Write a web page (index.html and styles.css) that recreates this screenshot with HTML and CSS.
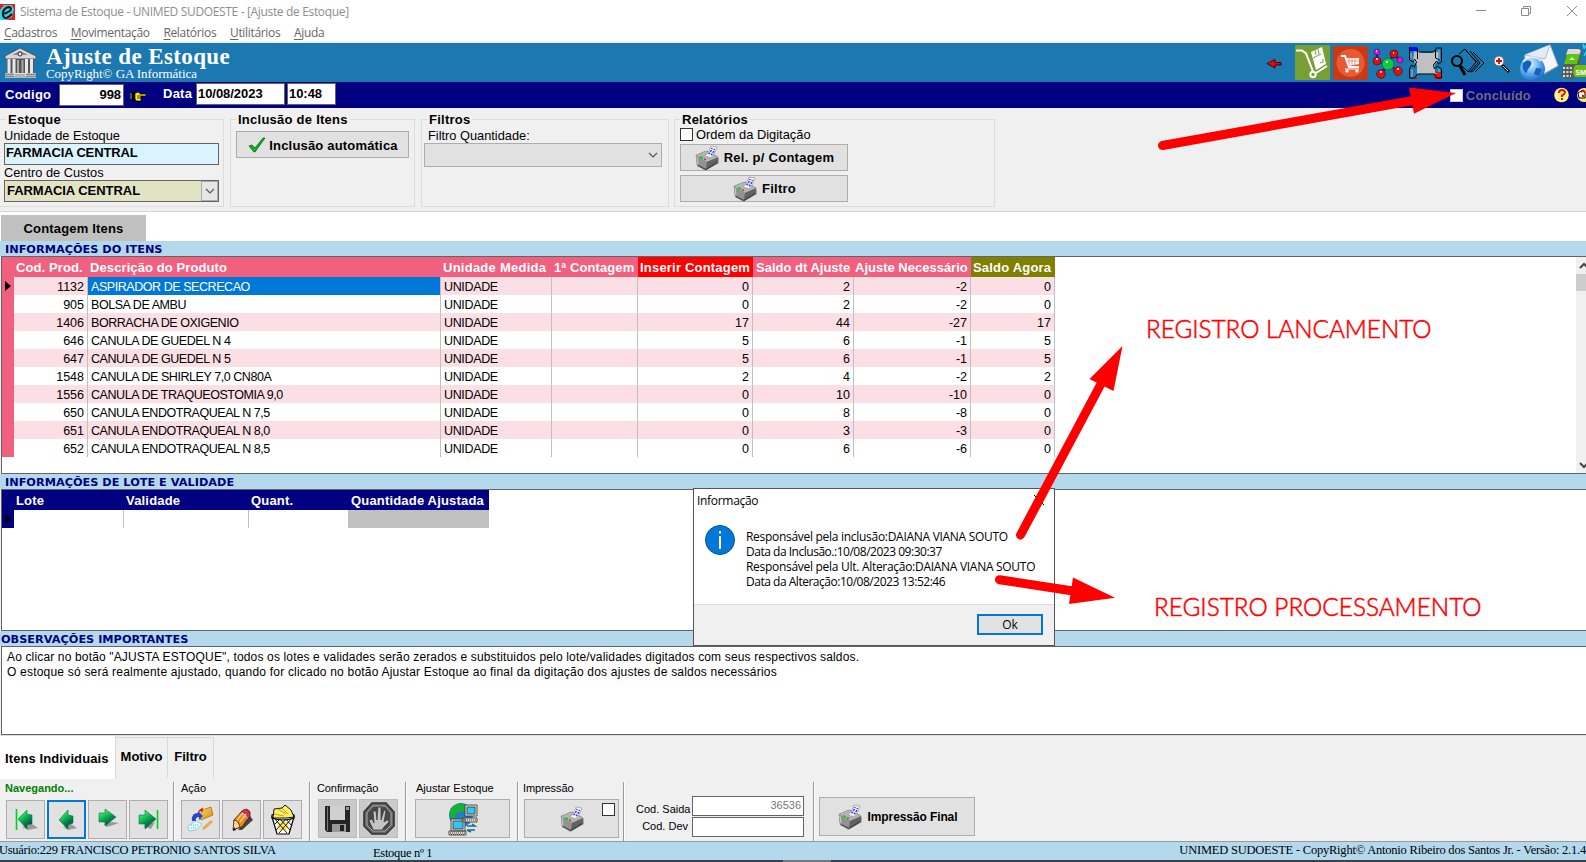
FILE: index.html
```html
<!DOCTYPE html>
<html lang="pt-BR">
<head>
<meta charset="utf-8">
<title>Sistema de Estoque</title>
<link rel="stylesheet" href="styles.css">
</head>
<body>
<svg class="defs" width="0" height="0">
  <defs>
    <linearGradient id="gold" x1="0" y1="0" x2="1" y2="1"><stop offset="0" stop-color="#ffe07a"/><stop offset="1" stop-color="#d28a08"/></linearGradient>
    <linearGradient id="leaf" x1="0" y1="0" x2=".6" y2="1"><stop offset="0" stop-color="#7dffa0"/><stop offset=".4" stop-color="#18d050"/><stop offset=".65" stop-color="#089050"/><stop offset="1" stop-color="#004a40"/></linearGradient>
    <radialGradient id="globe" cx=".4" cy=".3" r=".8"><stop offset="0" stop-color="#e8f6ff"/><stop offset=".5" stop-color="#5aa8ec"/><stop offset="1" stop-color="#0a55b8"/></radialGradient>
    <symbol id="printer" viewBox="0 0 26 26">
      <path d="M3 20 11 26 25 18 24 14z" fill="#9a9a9a"/>
      <path d="M2 12Q1 10 3 9.500L11 6q2-.5 4 .5l8 4.500q2 1 1.500 3L24 18 12 25 3 21z" fill="#777"/>
      <path d="M2 10.500 12 6 24 12 13 17z" fill="#b4b4b4"/>
      <path d="M2 10.500 13 17 12 25 3 21z" fill="#929292"/>
      <path d="M13 17 24 12.500 24 18 12 25z" fill="#626262"/>
      <path d="M4 20.500 12 24.500 23 17.500" stroke="#3a3a3a" fill="none"/>
      <path d="M3 12l1 7" stroke="#d0d0d0"/>
      <path d="M11 11q4-3 6-10l6 1q-2 7-6 11z" fill="#eef0ff" stroke="#999" stroke-width=".7"/>
      <path d="M14.500 9q2.500-2 3.500-6M17 10q2.500-2 3.500-6" fill="none" stroke="#2f35e0" stroke-width="1.500" stroke-dasharray="2 1"/>
      <path d="M6 12l3 1" stroke="#10d020" stroke-width="2"/><path d="M10 14l2 .5" stroke="#e03030" stroke-width="1.500"/>
    </symbol>
    <symbol id="chev" viewBox="0 0 10 6"><path d="M1 1l4 4 4-4" fill="none" stroke="#555" stroke-width="1.200"/></symbol>
  </defs>
</svg>

<div class="app">
  <header class="titlebar">
    <svg width="15" height="16" viewBox="0 0 15 16"><path fill="#f01818" d="M0 0h15v16H0z"/><path fill="#28d8e8" d="M4 1h8l2 4-2 8-6 3H0V6z"/><path d="M2 10C9 9 13 5 10 3.500S2 6 3 11s5 3 9-1" fill="none" stroke="#111" stroke-width="2"/></svg>
    <span class="title-text">Sistema de Estoque - UNIMED SUDOESTE - [Ajuste de Estoque]</span>
    <svg class="winbtns" width="110" height="20" viewBox="0 0 110 20" fill="none" stroke="#8b8b8b"><path d="M0 8.500h10M45.500 6.500h7v7h-7zM47.500 6V4.500h7v7H53M91 4l10 10M101 4 91 14"/></svg>
  </header>
  <nav class="menubar"><span><u>C</u>adastros</span><span><u>M</u>ovimentação</span><span><u>R</u>elatórios</span><span><u>U</u>tilitários</span><span><u>A</u>juda</span></nav>

  <div class="banner">
    <svg class="bank" width="33" height="33" viewBox="0 0 33 33">
      <path d="M1 9 16 1l16 8v3H1z" fill="#d8d8d8" stroke="#555"/><path d="M8 8l8-4 8 4z" fill="#888"/><circle cx="16" cy="7" r="2" fill="#eee" stroke="#333"/>
      <path d="M3 12h27v14H3z" fill="#555"/><path d="M5 12v14M10 12v14M22.500 12v14M27.500 12v14" stroke="#e8e8e8" stroke-width="3"/><path d="M14 13v13M18.500 13v13" stroke="#a8a8a8" stroke-width="2"/>
      <path d="M1 26h31v5H1z" fill="#bbb"/><path d="M1 27.500h31M1 29.500h31" stroke="#888"/><path d="M10 26h12v5H10z" fill="#e0e0e0"/><path d="M11 28h10M10 30h12" stroke="#888"/>
    </svg>
    <div class="banner-titles"><h1>Ajuste de Estoque</h1><p>CopyRight© GA Informática</p></div>
    <div class="banner-icons">
      <svg width="33" height="39" viewBox="0 0 33 39"><path d="M5 20.500 13 16.500v3h6v2.500h-6v3z" fill="#f00" stroke="#300" stroke-width=".9"/></svg>
      <svg width="35" height="39" viewBox="0 0 35 39"><rect y="2" width="35" height="35" rx="1" fill="#789f34"/><path d="M1 7.500h6l4 3 7 18" fill="none" stroke="#fff" stroke-width="2"/><circle cx="18" cy="31.500" r="2.700" fill="none" stroke="#fff" stroke-width="2"/><path d="M21 30l11-7" stroke="#fff" stroke-width="2"/><path d="M16 9l11-5 4 17-10 6z" fill="#fff"/><path d="M20 7l1 5M23 6l1 5M18 15l8-4M25 20l3-1v-3" stroke="#789f34" fill="none"/></svg>
      <svg width="41" height="39" viewBox="0 0 41 39"><rect x="3" y="3" width="35" height="34" rx="2" fill="#c93a14"/><circle cx="20.500" cy="20" r="14" fill="#e85a34"/><path d="M11 13h4l4 11h10" fill="none" stroke="#fff" stroke-width="2"/><path d="M16 15h13v6l-11 2z" fill="#fff"/><path d="M17 18h12M19 15v7M22 15v7M25 15v7" stroke="#e85a34" stroke-width=".6"/><circle cx="17" cy="28" r="1.600" fill="#fff"/><circle cx="27" cy="28" r="1.600" fill="#fff"/><path d="M15 26h14" stroke="#fff"/></svg>
      <svg width="34" height="39" viewBox="0 0 34 39"><path d="M16 22 7 18M16 22l8-12M16 22 10 31M16 22l12 6M24 11l4 6M6 10v8" stroke="#0018c8" stroke-width="2.400"/><path d="M16 22 7 18M16 22l8-12M16 22 10 31M16 22l12 6" stroke="#aaf" stroke-dasharray="1 2"/><circle cx="17" cy="21" r="6" fill="#10c83a" stroke="#063" stroke-width=".7"/><g fill="#e01010" stroke="#600" stroke-width=".7"><circle cx="6" cy="18" r="3.900"/><circle cx="23" cy="11" r="4"/><circle cx="10" cy="31" r="4.300"/><circle cx="27" cy="28" r="4.300"/></g><g fill="#d020d0" stroke="#606" stroke-width=".7"><circle cx="6" cy="9" r="2.900"/><circle cx="29" cy="17" r="2.900"/></g><path d="M15 19h2M22 10h1M9 29h2M26 26h2M5 16h2M5 8h1" stroke="#fff" stroke-width="1.400"/></svg>
      <svg width="41" height="39" viewBox="0 0 41 39"><path d="M30 29h6v7h-7zM6 36l6-3v3z" fill="#f01010"/><path d="M5 4h7v4H5z" fill="#0010f0"/><path d="M9 9h5l4 1h8l4-1h3v9l-3 3v9l3 1H12V22l-4-4z" fill="#c0c0c0"/><path d="M4.500 4v13l4 2 1-3 2 3-2 5-3-2-2 4v9h5l3-4h17l2 4h5V26l-4-3-3 3-1-4 3-4 2 3 3-2V5h-5l-3 4H14M12.500 5v11M30.500 6v9l4 2" fill="none" stroke="#000"/><path d="M6 10v6M10 8v8M7 26v8M34 7v9M34 26v3" stroke="#9cc5dc"/></svg>
      <svg width="43" height="39" viewBox="0 0 43 39" fill="none" stroke="#000"><path d="M13 11 19 6l11 13-8 10-6-6M20 8l12 12-8 9-3-1M24 8l10 12-8 9-3-1M27 9l11 11-9 9"/><circle cx="11" cy="18" r="5" stroke-width="2.200"/><path d="M14 23l5 9" stroke-width="3"/></svg>
      <svg width="27" height="39" viewBox="0 0 27 39"><path d="M13 22l7 7" stroke="#000" stroke-width="2.600"/><path d="M14 23l5 5" stroke="#ddd"/><circle cx="10" cy="18" r="5" fill="#f7f7f7" stroke="#666"/><path d="M10 15v6M7 18h6" stroke="#e00010" stroke-width="1.800"/></svg>
      <svg width="45" height="39" viewBox="0 0 45 39"><path d="M9 12 34 2l8 21-14 8-19-9z" fill="#f5f7fc" stroke="#c0c6d8"/><path d="M9 12l20 4 5-14" fill="#e6eaf5" stroke="#b4bace"/><path d="M28 31 42 23" stroke="#889"/><circle cx="16.500" cy="26" r="12.500" fill="url(#globe)"/><path d="M7 20c5-5 10-2 8 2s-4 4-4 8c-4-1-5-6-4-10zM20 25l6 1-3 7-5-2z" fill="#1460bc"/><path d="M7 19c4-6 13-6 18-1" fill="none" stroke="#fff" opacity=".7" stroke-width="2"/></svg>
      <svg width="25" height="39" viewBox="0 0 25 39"><path d="M6 6 17 5l4 3-5 27-10 1-6-3z" fill="#565e5c"/><path d="M7 6h11l2 2-2 4H5z" fill="#d8dcdc"/><path d="M6 11h13l-3 10H3z" fill="#5fc214"/><path d="M8 17l3-3 3 3z" fill="#d8ffc0"/><path d="M2 25h9M2 29h9M2 33h8" stroke="#ddd" stroke-width="2" stroke-dasharray="2 1.500"/><path d="M15 22h12v12H14l-2-4 1-6z" fill="#70bd18"/><text x="14.500" y="31.500" class="sms">SM</text><path d="M22 1l1 4m2-3-2 4m2 3-2 4" stroke="#30d8f0" stroke-width="1.400"/></svg>
    </div>
  </div>

  <div class="codebar">
    <label class="cb-label c1">Codigo</label><div class="cb-input i1">998</div>
    <svg width="16" height="12" viewBox="0 0 16 12"><path d="M0 2h5v9H0z" fill="#000"/><path d="M1 3v6" stroke="#30d8d8"/><path d="M5 3l4-1 1 2h6v2h-5v5H6L5 9z" fill="#ffe818" stroke="#000" stroke-width=".7"/><path d="M7 6h4M7 8h4" stroke="#000" stroke-width=".7"/></svg>
    <label class="cb-label c2">Data</label><div class="cb-input i2">10/08/2023</div><div class="cb-input i3">10:48</div>
    <div class="done"><i></i><span>Concluído</span></div>
    <svg width="32" height="16" viewBox="0 0 32 16"><circle cx="7.500" cy="8" r="7.300" fill="#fff27a"/><path d="M5 6q0-3 3-3t3 2.500Q10 8 8 8.500V10" fill="none" stroke="#e01010" stroke-width="2"/><path d="M7 12h2" stroke="#e01010" stroke-width="2"/><circle cx="30" cy="8" r="7" fill="#ffef70"/><path d="M24 6l5-3 2 3v5h-6z" fill="#fff" stroke="#000"/><path d="M27 5q3-3 4 1M29 8v2" fill="none" stroke="#e01010" stroke-width="2"/></svg>
  </div>

  <section class="filters">
    <div class="group g1"><h2>Estoque</h2>
      <p class="lab">Unidade de Estoque</p><div class="field cyan">FARMACIA CENTRAL</div>
      <p class="lab second">Centro de Custos</p><div class="field khaki"><span>FARMACIA CENTRAL</span><b><svg width="10" height="6"><use href="#chev"/></svg></b></div>
    </div>
    <div class="group g2"><h2>Inclusão de Itens</h2>
      <div class="btn auto"><svg width="18" height="16" viewBox="0 0 18 16"><path d="M1 9l3-1 3 3L15 1h2L7 15H6z" fill="#10b020" stroke="#075010" stroke-width=".7"/></svg><span>Inclusão automática</span></div>
    </div>
    <div class="group g3"><h2>Filtros</h2><p class="lab">Filtro Quantidade:</p><div class="combo"><svg width="10" height="6"><use href="#chev"/></svg></div></div>
    <div class="group g4"><h2>Relatórios</h2>
      <div class="check"><i></i><span>Ordem da Digitação</span></div>
      <div class="btn rel"><svg width="26" height="26"><use href="#printer"/></svg><span>Rel. p/ Contagem</span></div>
      <div class="btn rel"><svg width="26" height="26"><use href="#printer"/></svg><span>Filtro</span></div>
    </div>
  </section>

  <div class="tabrow"><div class="tab">Contagem Itens</div></div>
  <div class="band">INFORMAÇÕES DO ITENS</div>
  <div class="box items">
    <table class="grid">
      <colgroup><col style="width:12px"><col style="width:74px"><col style="width:353px"><col style="width:111px"><col style="width:86px"><col style="width:115px"><col style="width:101px"><col style="width:117px"><col style="width:84px"></colgroup>
      <tr><th></th><th>Cod. Prod.</th><th>Descrição do Produto</th><th class="um">Unidade Medida</th><th>1ª Contagem</th><th class="red">Inserir Contagem</th><th class="dt">Saldo dt Ajuste</th><th class="nec">Ajuste Necessário</th><th class="olive">Saldo Agora</th></tr>
      <tr><td><i class="ind"></i></td><td>1132</td><td class="sel">ASPIRADOR DE SECRECAO</td><td>UNIDADE</td><td></td><td>0</td><td>2</td><td>-2</td><td>0</td></tr>
      <tr><td></td><td>905</td><td>BOLSA DE AMBU</td><td>UNIDADE</td><td></td><td>0</td><td>2</td><td>-2</td><td>0</td></tr>
      <tr><td></td><td>1406</td><td>BORRACHA DE OXIGENIO</td><td>UNIDADE</td><td></td><td>17</td><td>44</td><td>-27</td><td>17</td></tr>
      <tr><td></td><td>646</td><td>CANULA DE GUEDEL N 4</td><td>UNIDADE</td><td></td><td>5</td><td>6</td><td>-1</td><td>5</td></tr>
      <tr><td></td><td>647</td><td>CANULA DE GUEDEL N 5</td><td>UNIDADE</td><td></td><td>5</td><td>6</td><td>-1</td><td>5</td></tr>
      <tr><td></td><td>1548</td><td>CANULA DE SHIRLEY 7,0 CN80A</td><td>UNIDADE</td><td></td><td>2</td><td>4</td><td>-2</td><td>2</td></tr>
      <tr><td></td><td>1556</td><td>CANULA DE TRAQUEOSTOMIA 9,0</td><td>UNIDADE</td><td></td><td>0</td><td>10</td><td>-10</td><td>0</td></tr>
      <tr><td></td><td>650</td><td>CANULA ENDOTRAQUEAL N 7,5</td><td>UNIDADE</td><td></td><td>0</td><td>8</td><td>-8</td><td>0</td></tr>
      <tr><td></td><td>651</td><td>CANULA ENDOTRAQUEAL N 8,0</td><td>UNIDADE</td><td></td><td>0</td><td>3</td><td>-3</td><td>0</td></tr>
      <tr><td></td><td>652</td><td>CANULA ENDOTRAQUEAL N 8,5</td><td>UNIDADE</td><td></td><td>0</td><td>6</td><td>-6</td><td>0</td></tr>
    </table>
    <div class="scroll"><svg width="10" height="17" viewBox="0 0 10 17"><path d="M4 11l4-4 4 4" fill="none" stroke="#444" stroke-width="2"/></svg><i></i><svg class="down" width="10" height="17" viewBox="0 0 10 17"><path d="M4 7l4 4 4-4" fill="none" stroke="#444" stroke-width="2"/></svg></div>
  </div>
  <div class="band">INFORMAÇÕES DE LOTE E VALIDADE</div>
  <div class="box lots">
    <table class="grid navy">
      <colgroup><col style="width:12px"><col style="width:110px"><col style="width:125px"><col style="width:100px"><col style="width:140px"></colgroup>
      <tr><th></th><th>Lote</th><th>Validade</th><th>Quant.</th><th>Quantidade Ajustada</th></tr>
      <tr><td><i class="ind"></i></td><td></td><td></td><td></td><td class="gray"></td></tr>
    </table>
  </div>
  <div class="band obs">OBSERVAÇÕES IMPORTANTES</div>
  <div class="box notes"><p class="n1">Ao clicar no botão "AJUSTA ESTOQUE", todos os lotes e validades serão zerados e substituidos pelo lote/validades digitados com seus respectivos saldos.</p><p class="n2">O estoque só será realmente ajustado, quando for clicado no botão Ajustar Estoque ao final da digitação dos ajustes de saldos necessários</p></div>

  <div class="pages"><div class="page on">Itens Individuais</div><div class="page p2">Motivo</div><div class="page p3">Filtro</div></div>

  <div class="actions">
    <div class="act a1"><h3 class="nav">Navegando...</h3><div class="row">
      <div class="btn sq"><svg width="24" height="26" viewBox="0 0 24 26"><path d="M8 20l10-3 6 4-10 2z" fill="#999"/><path d="M4 12 13 3v4l5 1v9l-5 1v4z" fill="url(#leaf)" stroke="#074" stroke-width=".6"/><path d="M2.500 2v21" stroke="#00d020" stroke-width="1.600"/></svg></div>
      <div class="btn sq focus"><svg width="24" height="26" viewBox="0 0 24 26"><path d="M8 20l8-3 6 4-9 2z" fill="#999"/><path d="M4 13 13 3v5l5 1v7l-5 2v4z" fill="url(#leaf)" stroke="#074" stroke-width=".6"/></svg></div>
      <div class="btn sq"><svg width="24" height="26" viewBox="0 0 24 26"><path d="M8 17l8-2 7 1-12 4z" fill="#999"/><path d="M3 6h6V2l11 8-11 9v-4H3z" fill="url(#leaf)" stroke="#074" stroke-width=".6"/></svg></div>
      <div class="btn sq"><svg width="24" height="26" viewBox="0 0 24 26"><path d="M6 19l12-4-4 7z" fill="#999"/><path d="M2 8h6V3l11 9-11 10v-5H2z" fill="url(#leaf)" stroke="#074" stroke-width=".6"/><path d="M20.500 3v19" stroke="#00d020" stroke-width="1.600"/></svg></div>
    </div></div>
    <div class="act a2"><h3>Ação</h3><div class="row">
      <div class="btn sq"><svg width="28" height="28" viewBox="0 0 28 28"><path d="M11 6l4-2 9-3 2 8-12 5z" fill="url(#gold)" stroke="#a66a00" stroke-width=".7"/><path d="M12 5l3-2v3" stroke="#e01010" stroke-width="1.500" fill="none"/><path d="M5 15q-1-8 6-8v-2l5 5-4 4v-3q-4 0-3 4z" fill="#2048d0"/><path d="M1 20l8-5 6 3-6 6-7 1z" fill="#e8ffff" stroke="#78c8d8" stroke-width=".8"/><path d="M4 19h8M4 22h6" stroke="#40b8c8" stroke-dasharray="1 1"/><path d="M16 23l9-8" stroke="#e0b050" stroke-width="3"/></svg></div>
      <div class="btn sq"><svg width="26" height="26" viewBox="0 0 26 26"><path d="M9 23 21 9l3 4-11 10z" fill="#444"/><path d="M5 13 13 4l7 6-7 10-8 2z" fill="#e88820" stroke="#402000" stroke-width=".8"/><path d="M13 4q5-4 8 1v6l-3 1-6-6z" fill="#d03050" stroke="#600020" stroke-width=".8"/><path d="M12.500 5.500l6 6" stroke="#c8c8c8" stroke-width="1.600"/><path d="M8 13l6-7M11 15l6-8" stroke="#ffd060" stroke-width="1.400"/><path d="M5 13q4 0 6 7l-7 3z" fill="#ffd8a0" stroke="#402000" stroke-width=".8"/><path d="M4 24l3-1-2-3z" fill="#000"/></svg></div>
      <div class="btn sq"><svg width="28" height="32" viewBox="0 0 28 32"><path d="M3 13l5 17h12l5-17z" fill="#fff" stroke="#000" stroke-width="1.200"/><path d="M8 18h12l-2 8h-8z" fill="#ffec50"/><path d="M5 14l13 15M10 14l11 12M16 14l7 8M23 14 10 29M18 14 7 26M12 14l-7 7" stroke="#000" stroke-width=".9"/><path d="M3 11q11-6 22 0v3q-11 4-22 0z" fill="#ddd" stroke="#000" stroke-width="1.200"/><path d="M5 5l8-1 3-3 6 5 3 7-8 1H4z" fill="#ffee60" stroke="#000" stroke-width=".9"/><path d="M9 5l8 5M13 4l6 6M5 10l10 2" stroke="#b09820" stroke-width=".9"/></svg></div>
    </div></div>
    <div class="act a3"><h3>Confirmação</h3><div class="row">
      <div class="btn sq dim"><svg width="27" height="28" viewBox="0 0 27 28"><path d="M1 1h25v26H3l-2-2z" fill="#252525"/><path d="M6 1h15v14H6z" fill="#d0d0d0"/><path d="M22 2h3v3h-3zM8 19h14v8H8z" fill="#999"/><path d="M16 20h4v6h-4z" fill="#222"/><path d="M3.500 2v24" stroke="#777"/></svg></div>
      <div class="btn sq dim"><svg width="35" height="35" viewBox="0 0 35 35"><path d="M11 2h14l8 9v14l-8 8H11l-8-8V11z" fill="#666" stroke="#333" stroke-width="1.600"/><path d="M12 5h12l6 7v12l-6 6H12l-6-6V12z" fill="#484848" stroke="#aaa"/><path d="M12 29c-1-4-3-6-4-10l3-1 2 4-1-12h3l1 9 1-13h3v13l3-10 2 1-2 11 3-2q3 0 1 3l-4 4-2 3z" fill="#c4c4c4" stroke="#333" stroke-width=".7"/></svg></div>
    </div></div>
    <div class="act a4"><h3>Ajustar Estoque</h3><div class="btn wide"><svg width="32" height="34" viewBox="0 0 32 34"><circle cx="14" cy="13" r="12" fill="#2478dc"/><path d="M4 6l8-5 8 3-4 6-6 1-4 7-4-5zM13 14l6 2-2 9z" fill="#18b030"/><g stroke="#333" stroke-width=".8"><path d="M18 3h12v11H18zM15 16h15v4H15zM4 17h14v12H4zM2 29h17v4H2z" fill="#e0dcc8"/><path d="M20 5h8v7h-8zM6 19h10v8H6z" fill="#30c8f8"/></g><path d="M3 31h15M4 32.500h13M16 18h13" stroke="#444" stroke-dasharray="1 1"/><path d="M20 24h8l-3-2M28 28h-8l4 2" stroke="#107090" stroke-width="1.500" fill="none"/></svg></div></div>
    <div class="act a5"><h3>Impressão</h3><div class="btn wide"><svg width="26" height="26"><use href="#printer"/></svg><i></i></div></div>
    <div class="act a6"><div class="codes"><span>Cod. Saida</span><div>36536</div><span>Cod. Dev</span><div></div></div></div>
    <div class="act a7"><div class="btn final"><svg width="26" height="26"><use href="#printer"/></svg><span>Impressão Final</span></div></div>
  </div>
  <footer class="status"><span class="u">Usuário:229 FRANCISCO PETRONIO SANTOS SILVA</span><span class="e">Estoque nº 1</span><span class="v">UNIMED SUDOESTE - CopyRight© Antonio Ribeiro dos Santos Jr. - Versão: 2.1.4</span></footer>
  <div class="taskbar"><i></i></div>
</div>

<div class="dialog">
  <div class="dlg-title"><span>Informação</span><svg width="10" height="10" viewBox="0 0 10 10"><path d="M0 0l10 10M10 0 0 10" stroke="#000"/></svg></div>
  <div class="dlg-body">
    <svg width="30" height="30" viewBox="0 0 30 30"><circle cx="15" cy="15" r="14.500" fill="#0078d7" stroke="#0a4f90"/><path d="M15 11v13M15 6v2.500" stroke="#fff" stroke-width="2"/></svg>
    <div class="dlg-text"><p class="name">Responsável pela inclusão:DAIANA VIANA SOUTO</p><p class="date">Data da Inclusão.:10/08/2023 09:30:37</p><p class="name">Responsável pela Ult. Alteração:DAIANA VIANA SOUTO</p><p class="date">Data da Alteração:10/08/2023 13:52:46</p></div>
  </div>
  <div class="dlg-foot"><div class="ok">Ok</div></div>
</div>

<svg class="notes-layer" width="1586" height="862" viewBox="0 0 1586 862">
  <g stroke="#f00" stroke-width="9" stroke-linecap="round"><path d="M1162.500 145.500 1413 100.500M1020.500 535 1102 382M999.500 579.700 1073 591"/></g>
  <g fill="#f00"><path d="M1409 87.500 1456 93l-42 20.700zM1122.500 346l-33 33 24 12zM1073 577.500l42 20.200-46 6.300z"/>
  <text x="1146" y="338" textLength="285.500" lengthAdjust="spacingAndGlyphs">REGISTRO LANCAMENTO</text>
  <text x="1154" y="616" textLength="327.500" lengthAdjust="spacingAndGlyphs">REGISTRO PROCESSAMENTO</text></g>
</svg>
</body>
</html>
```
FILE: styles.css
```css
* { box-sizing: border-box; }
html, body { margin: 0; padding: 0; overflow: hidden; }
body { width: 1586px; height: 862px; position: relative; background: #f0f0f0; font: 13px/15px "Liberation Sans", Arial, sans-serif; color: #000; white-space: nowrap; }
h1, h2, h3, p { margin: 0; font-weight: normal; }
svg { display: block; flex: none; }
.defs { position: absolute; }
.app { width: 1586px; height: 862px; display: flex; flex-direction: column; overflow: hidden; }
.app > * { flex: none; }

.titlebar { height: 23px; background: #fff; display: flex; align-items: center; font: 12px/16px "Open Sans", sans-serif; color: #8e8e8e; }
.title-text { margin-left: 5px; letter-spacing: -.34px; }
.winbtns { margin-left: auto; margin-right: 0; }
.menubar { height: 20px; background: #fff; border-bottom: 2px solid #f0f0f0; padding-left: 4px; display: flex; gap: 13.700px; font: 12px/19px "Open Sans", sans-serif; letter-spacing: -.33px; color: #666; }
.menubar u { text-underline-offset: 2px; }

.banner { height: 39px; background: #1c78b0; display: flex; color: #fff; font-family: "Liberation Serif", serif; }
.bank { margin: 4px 0 0 4px; }
.banner-titles { margin-left: 9px; }
.banner h1 { font: bold 23px/27px "Liberation Serif", serif; letter-spacing: .38px; }
.banner p { font-size: 13px; line-height: 7px; letter-spacing: -.05px; }
.banner-icons { display: flex; margin-left: auto; }
.sms { font: bold 7px "Liberation Sans", sans-serif; fill: #fff; }

.codebar { height: 26px; background: #000080; color: #fff; font-weight: bold; display: flex; align-items: flex-start; padding-top: 1px; }
.cb-label { line-height: 23px; letter-spacing: .25px; }
.c1 { width: 54px; margin-left: 5px; }
.c2 { margin-left: 17px; width: 33px; line-height: 21px; }
.codebar > svg { margin-top: 7px; }
.cb-input { height: 22px; background: #fff; color: #000; border: 1px solid #646464; line-height: 20px; padding: 0 1px; font-size: 13px; letter-spacing: -.05px; }
.i1 { width: 65px; margin: 1px 6px 0 0; text-align: right; padding-right: 2px; line-height: 19px; }
.i2 { width: 89px; }
.i3 { width: 49px; margin-left: 2px; }
.done { margin-left: auto; display: flex; align-items: center; gap: 3px; height: 24px; color: #6d6d78; margin-right: 23px; letter-spacing: .18px; }
.done i { width: 13px; height: 13px; background: #fff; border: 1px solid #ccc; }
.codebar > svg:last-child { margin-top: 4px; }

.filters { height: 104px; background: #f0f0f0; border-bottom: 1px solid #d4d4d4; padding-top: 11px; display: flex; }
.group { height: 88px; border: 1px solid #dcdcdc; }
.group h2 { font-weight: bold; font-size: 13px; line-height: 16px; margin: -8px 0 -1px; background: #f0f0f0; width: max-content; padding: 0 2px; letter-spacing: .25px; }
.g1 { width: 225px; margin-left: -1px; padding-left: 4px; }
.g2 { width: 185px; margin-left: 6px; padding-left: 5px; }
.g3 { width: 248px; margin-left: 6px; padding-left: 2px; }
.g4 { width: 321px; margin-left: 5px; padding-left: 5px; }
.group.g1 h2 { margin-left: 2px; }
.group.g3 h2 { margin-left: 3px; }
.lab { font-size: 12.800px; line-height: 15px; margin-top: 1px; }
.g3 .lab { margin-left: 4px; }
.lab.second { margin-top: 0; }
.field { width: 215px; height: 22px; border: 1px solid #646464; font-weight: bold; line-height: 18px; padding-left: 1px; }
.cyan { letter-spacing: -.15px; background: #d9f3ff; line-height: 17px; }
.khaki { background: #e1e3c3; display: flex; padding-left: 2px; line-height: 19px; letter-spacing: -.05px; }
.khaki b { margin-left: auto; width: 17px; border: 1px solid #aaa; background: #e6e6e6; display: flex; align-items: center; justify-content: center; }
.btn { background: #e1e1e1; border: 1px solid #adadad; display: flex; align-items: center; justify-content: center; font-weight: bold; }
.auto { width: 173px; height: 27px; margin-top: 4px; gap: 3px; letter-spacing: .18px; padding: 1px 0 0 1px; }
.combo { height: 24px; width: 238px; background: #e1e1e1; border: 1px solid #adadad; display: flex; align-items: center; justify-content: flex-end; padding-right: 3px; }
.check { display: flex; align-items: center; gap: 3px; height: 15px; margin-top: 0; font-size: 12.900px; }
.check i { width: 13px; height: 13px; border: 1px solid #333; background: #fff; }
.rel { width: 168px; height: 27px; margin-top: 2px; gap: 4px; letter-spacing: .28px; padding: 0; }
.rel + .rel { margin-top: 4px; }

.tabrow { height: 29px; background: #fff; padding: 3px 0 0 1px; }
.tab { width: 145px; height: 26px; background: #c0c0c0; font-weight: bold; text-align: center; line-height: 27px; letter-spacing: .18px; }
.band { height: 15px; background: #b4d9ec; font: bold 11.300px/17px "DejaVu Sans", sans-serif; color: #000080; padding-left: 5px; }
.box { border: 1px solid #646464; border-right: 0; margin-left: 1px; background: #fff; }
.items { height: 218px; display: flex; justify-content: space-between; align-items: flex-start; }
.grid { border-collapse: separate; border-spacing: 0; table-layout: fixed; width: 1053px; }
.grid tr { height: 18px; }
.grid tr:first-child { height: 20px; }
.grid th { padding: 2px 0 0 2px; text-align: left; background: #f26080; color: #fff; font-weight: bold; line-height: 18px; letter-spacing: .1px; }
.grid td { padding: 2px 3px 0 0; height: 18px; line-height: 16px; border-right: 1px solid #c0c0c0; text-align: right; font-size: 12.500px; overflow: hidden; }
.grid td:nth-child(3), .grid td:nth-child(4) { text-align: left; padding-left: 3px; letter-spacing: -.44px; }
.grid td:nth-child(4) { letter-spacing: -.35px; }
.items tr:nth-child(even) td { background: #fcdfe5; }
.grid td:first-child, .items tr:nth-child(even) td:first-child { background: #f26080; border: 0; padding: 0; }
.ind { display: block; width: 0; height: 0; margin-left: 3px; border: solid transparent; border-width: 5px 0 5px 6px; border-left-color: #000; }
.grid th.um { letter-spacing: .25px; }
.grid th.red { background: #f00; letter-spacing: .2px; }
.grid th.olive { background: #808000; letter-spacing: .2px; }
.grid th.dt { padding-left: 3px; letter-spacing: 0; }
.grid th.nec { padding-left: 1px; letter-spacing: 0; }
.items .grid td.sel.sel { background: #0078d7; color: #fff; }
.scroll { width: 10px; height: 216px; background: #f0f0f0; display: flex; flex-direction: column; overflow: hidden; }
.scroll i { height: 17px; background: #cdcdcd; }
.down { margin-top: auto; }
.lots { height: 142px; }
.navy { width: 487px; }
.grid.navy th { letter-spacing: .18px; }
.grid.navy th, .grid.navy td:first-child { background: #000080; }
.grid.navy td.gray { background: #c0c0c0; border-color: #c0c0c0; }
.obs { padding-left: 1px; }
.notes { height: 89px; padding: 3px 0 0 5px; font-size: 12px; }
.n1 { letter-spacing: .152px; }
.n2 { letter-spacing: .205px; }

.pages { height: 44px; display: flex; align-items: flex-start; font-weight: bold; border-top: 1px solid #dcdcdc; }
.page { height: 41px; margin-top: 1px; border: 1px solid #d9d9d9; border-left: 0; border-bottom: 0; line-height: 37px; text-align: center; width: 52px; }
.p3 { width: 46px; }
.page.on { width: 116px; height: 43px; margin: 0; background: #fff; border: 0; border-right: 1px solid #d9d9d9; line-height: 45px; padding-left: 5px; text-align: left; letter-spacing: .1px; }

.actions { height: 63px; border-bottom: 1px solid #999; display: flex; font-size: 11px; }
.act { height: 59px; margin-top: 3px; border-right: 1px solid #999; box-shadow: 1px 0 #fff; }
.act h3 { font-size: 11px; line-height: 12px; height: 18px; }
.act h3.nav { color: #008000; font-weight: bold; margin-left: -1px; }
.row { display: flex; gap: 2px; }
.sq { width: 39px; height: 39px; }
.focus { border: 2px solid #0078d7; }
.dim { background: #cacaca; border-color: #bbb; }
.a1 { width: 174px; padding-left: 6px; }
.a2 { width: 136px; padding-left: 7px; }
.a3 { width: 96px; padding-left: 8px; }
.a4 { width: 112px; padding-left: 9px; }
.a5 { width: 106px; padding-left: 6px; }
.a6 { width: 190px; padding-left: 12px; }
.a7 { padding-left: 5px; border: 0; box-shadow: none; }
.a3 h3, .a4 h3, .a5 h3 { height: 17px; }
.a3 h3, .a5 h3 { margin-left: -1px; letter-spacing: -.1px; }
.a4 h3 { margin-left: 1px; }
.wide { width: 95px; height: 39px; position: relative; }
.wide i { position: absolute; right: 3px; top: 3px; width: 13px; height: 13px; border: 1px solid #333; background: #fff; }
.codes { display: grid; grid-template-columns: 52px 112px; grid-template-rows: 20px 20px; gap: 1px 4px; padding-top: 14px; line-height: 26px; text-align: right; }
.codes span:nth-of-type(2) { line-height: 19px; }
.codes div { background: #fff; border: 1px solid #646464; color: #777; line-height: 17px; padding-right: 2px; font-size: 11px; }
.final { width: 156px; height: 39px; margin-top: 15px; gap: 5px; font-size: 12px; padding-top: 1px; letter-spacing: -.1px; }

.status { height: 18px; background: #b4d9ec; display: flex; font: 12.500px/17px "Liberation Serif", serif; letter-spacing: -.22px; }
.status .u { width: 374px; margin-left: -1px; letter-spacing: -.28px; }
.status .e { line-height: 22px; letter-spacing: -.3px; }
.status .v { margin-left: auto; }
.taskbar { height: 2px; background: #3c4046; }
.taskbar i { display: block; width: 48px; height: 2px; margin-left: 783px; background: #777; }

.dialog { position: absolute; left: 693px; top: 488px; width: 362px; height: 158px; background: #fff; border: 1px solid #555; font: 12px/15px "Open Sans", sans-serif; display: flex; flex-direction: column; }
.dlg-title { height: 36px; padding: 4px 10px 0 3px; display: flex; justify-content: space-between; letter-spacing: -.3px; }
.dlg-title svg { margin-top: 2px; }
.dlg-body { height: 79px; display: flex; padding-left: 11px; gap: 11px; }
.dlg-text { padding-top: 4px; }
.name { letter-spacing: -.29px; }
.date { letter-spacing: -.48px; }
.dlg-foot { flex: 1; background: #f0f0f0; border-top: 1px solid #dfdfdf; padding: 9px 11px; display: flex; justify-content: flex-end; }
.ok { width: 66px; height: 21px; border: 2px solid #0078d7; background: #e1e1e1; text-align: center; line-height: 17px; }
.notes-layer { position: absolute; left: 0; top: 0; pointer-events: none; }
.notes-layer text { font: 300 25px Lato, sans-serif; stroke: #f00; stroke-width: .55px; }
```
